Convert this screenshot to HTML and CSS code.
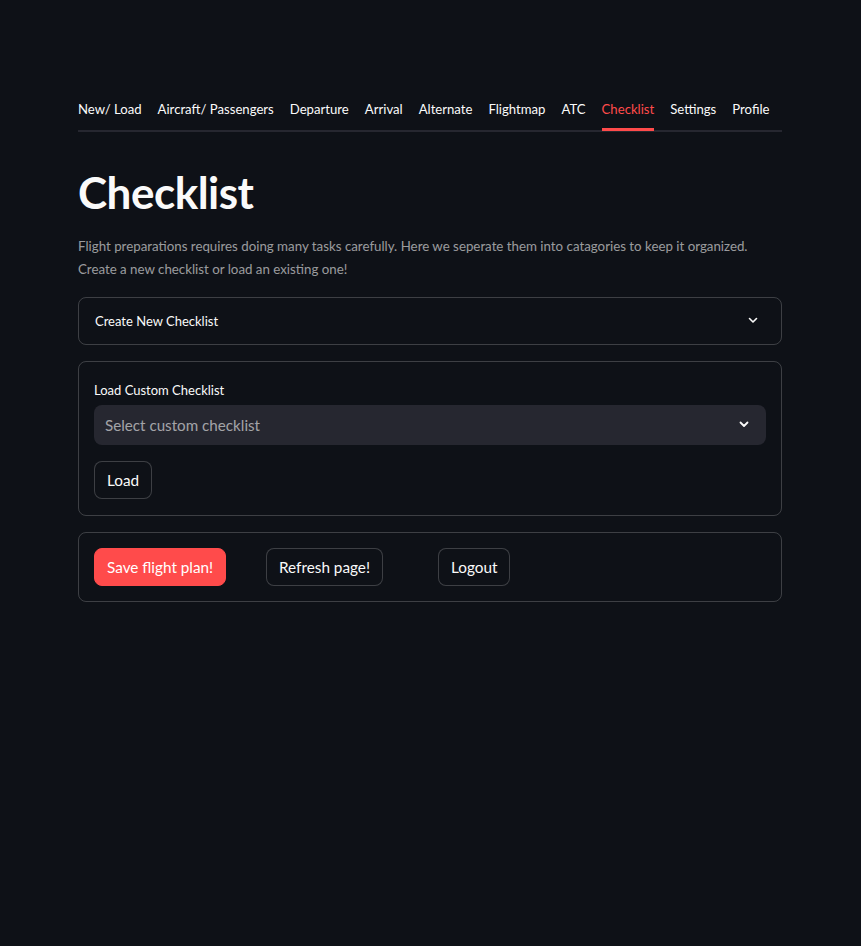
FILE: index.html
```html
<!DOCTYPE html>
<html lang="en">
<head>
<meta charset="utf-8">
<title>Checklist</title>
<link rel="stylesheet" href="styles.css">
</head>
<body>
<main class="main">
  <nav class="tabs">
    <span class="tab">New/ Load</span>
    <span class="tab">Aircraft/ Passengers</span>
    <span class="tab">Departure</span>
    <span class="tab">Arrival</span>
    <span class="tab">Alternate</span>
    <span class="tab">Flightmap</span>
    <span class="tab">ATC</span>
    <span class="tab tab-active">Checklist</span>
    <span class="tab">Settings</span>
    <span class="tab">Profile</span>
  </nav>

  <h1 class="title">Checklist</h1>
  <p class="intro">Flight preparations requires doing many tasks carefully. Here we seperate them into catagories to keep it organized.<br>Create a new checklist or load an existing one!</p>

  <section class="expander">
    <span class="expander-label">Create New Checklist</span>
    <svg class="chev" width="10" height="7" viewBox="0 0 10 7"><path d="M1.5 1.5 L5 5 L8.5 1.5" fill="none" stroke="#fafafa" stroke-width="1.6" stroke-linecap="round" stroke-linejoin="round"/></svg>
  </section>

  <section class="box form-box">
    <label class="field-label">Load Custom Checklist</label>
    <div class="select">
      <span class="placeholder">Select custom checklist</span>
      <svg class="chev" width="10" height="7" viewBox="0 0 10 7"><path d="M1.5 1.5 L5 5 L8.5 1.5" fill="none" stroke="#fafafa" stroke-width="1.8" stroke-linecap="round" stroke-linejoin="round"/></svg>
    </div>
    <div class="row-start">
      <button class="btn">Load</button>
    </div>
  </section>

  <section class="box actions">
    <div class="col"><button class="btn btn-primary">Save flight plan!</button></div>
    <div class="col"><button class="btn">Refresh page!</button></div>
    <div class="col"><button class="btn">Logout</button></div>
  </section>
</main>
</body>
</html>
```
FILE: styles.css
```css
html, body {
  margin: 0;
  padding: 0;
  background: #0e1117;
  color: #fafafa;
  font-family: "Lato", "Noto Sans", sans-serif;
}

.main {
  width: 705px;
  margin: 0 auto;
  padding: 96px 1px 0 0;
  box-sizing: border-box;
  display: flex;
  flex-direction: column;
}

.tabs {
  display: flex;
  gap: 16px;
  border-bottom: 2px solid #262730;
  height: 34px;
}

.tab {
  font-size: 13.15px;
  line-height: 26px;
  color: #fafafa;
  white-space: nowrap;
  height: 34px;
  box-sizing: border-box;
}

.tab-active {
  color: #ff4b4b;
  border-bottom: 3px solid #ff4b4b;
  height: 35px;
}

.title {
  font-size: 44px;
  font-weight: 700;
  line-height: 1.2;
  margin: 34px 0 0 0;
  letter-spacing: -0.5px;
}

.intro {
  font-size: 13.3px;
  line-height: 23px;
  color: rgba(250, 250, 250, 0.6);
  margin: 16px 0 0 0;
}

.expander {
  margin-top: 16px;
  height: 48px;
  border: 1px solid rgba(250, 250, 250, 0.2);
  border-radius: 8px;
  box-sizing: border-box;
  padding: 0 23px 0 16px;
  display: flex;
  align-items: center;
  justify-content: space-between;
  font-size: 13px;
}

.box {
  border: 1px solid rgba(250, 250, 250, 0.2);
  border-radius: 8px;
  box-sizing: border-box;
  padding: 16px 15px;
}

.form-box {
  margin-top: 16px;
  display: flex;
  flex-direction: column;
}

.field-label {
  font-size: 13px;
  line-height: 22px;
  margin-top: 1px;
}

.select {
  margin-top: 4px;
  height: 40px;
  background: #262730;
  border-radius: 8px;
  display: flex;
  align-items: center;
  justify-content: space-between;
  padding: 0 17px 0 11px;
  font-size: 15.2px;
}

.placeholder {
  color: rgba(250, 250, 250, 0.6);
}

.row-start {
  display: flex;
  margin-top: 16px;
}

.btn {
  font-family: inherit;
  font-size: 15.3px;
  color: #fafafa;
  background: #0e1117;
  border: 1px solid rgba(250, 250, 250, 0.2);
  border-radius: 8px;
  height: 38px;
  padding: 0 12px;
  cursor: pointer;
}

.btn-primary {
  background: #ff4b4b;
  border-color: #ff4b4b;
  color: #fff;
}

.actions {
  margin-top: 16px;
  height: 70px;
  display: grid;
  grid-template-columns: repeat(3, 156px);
  gap: 16px;
  align-items: center;
  padding: 0 15px;
}
```
